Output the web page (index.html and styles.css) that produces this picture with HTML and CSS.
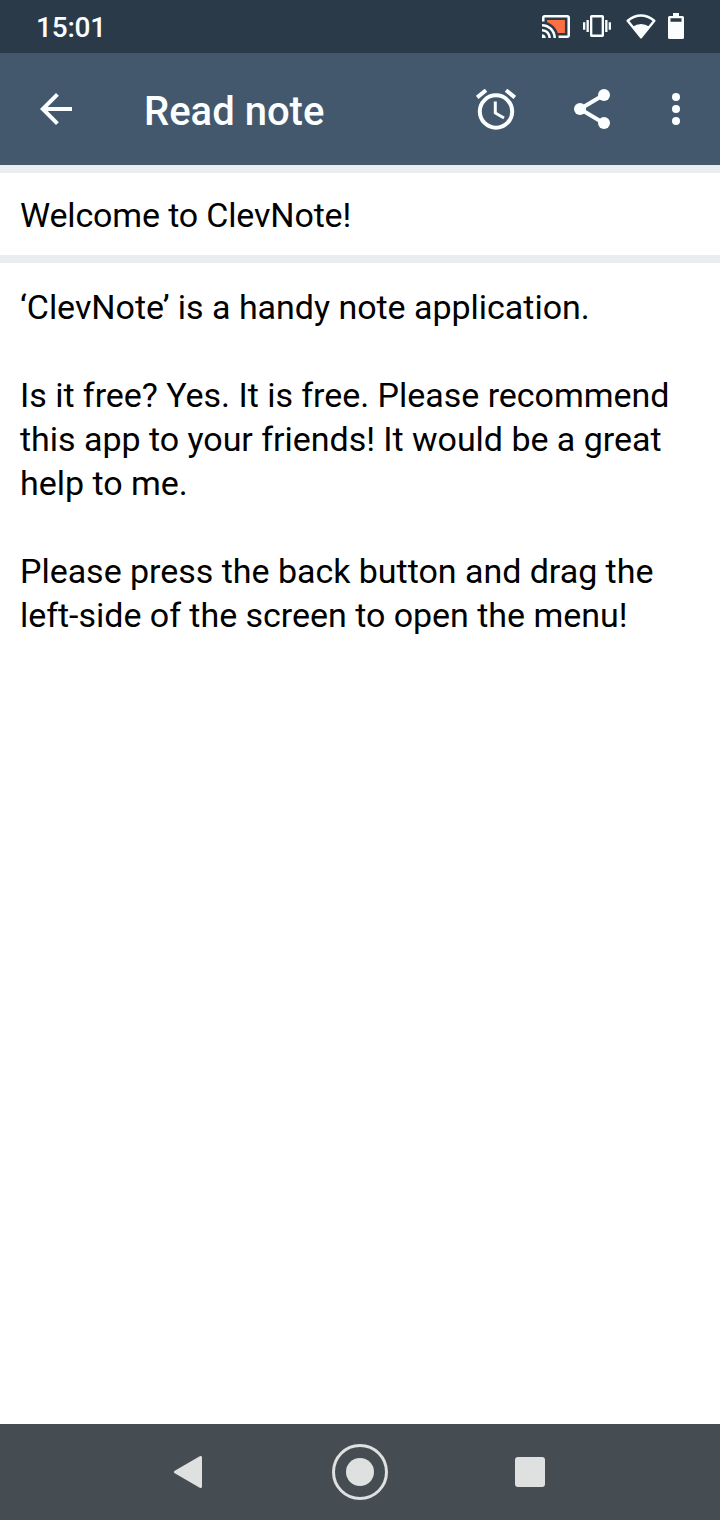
FILE: index.html
```html
<!DOCTYPE html>
<html lang="en">
<head>
<meta charset="utf-8">
<title>Read note</title>
<link rel="stylesheet" href="styles.css">
</head>
<body>
<div class="screen">
  <div class="status-bar">
    <span class="clock">15:01</span>
    <div class="status-icons">
      <svg class="cast" viewBox="1 3 22 18" preserveAspectRatio="none"><path class="accent" d="M19 7H5v1.63c3.96 1.28 7.09 4.41 8.37 8.37H19V7z"/><path d="M1 18v3h3c0-1.66-1.34-3-3-3zm0-4v2c2.76 0 5 2.24 5 5h2c0-3.87-3.13-7-7-7zM1 10v2c4.97 0 9 4.03 9 9h2c0-6.08-4.93-11-11-11zm20-7H3c-1.1 0-2 .9-2 2v3h2V5h18v14h-7v2h7c1.1 0 2-.9 2-2V5c0-1.1-.9-2-2-2z"/></svg>
      <svg class="vibrate" viewBox="0 3 24 18" preserveAspectRatio="none"><path d="M0 15h2V9H0v6zm3 2h2V7H3v10zm19-8v6h2V9h-2zm-3 8h2V7h-2v10zM16.5 3h-9C6.67 3 6 3.67 6 4.5v15c0 .83.67 1.5 1.5 1.5h9c.83 0 1.5-.67 1.5-1.5v-15c0-.83-.67-1.5-1.5-1.5zM16 19H8V5h8v14z"/></svg>
      <svg class="wifi" viewBox="0 0 30 25"><path class="outline" d="M1.700 6.700Q15-3.700 28.300 6.700L15 23.200z"/><path d="M6.500 12.800Q15 7.400 23.500 12.800L15 23.500z"/></svg>
      <svg class="battery" viewBox="0 0 16 26"><path fill-rule="evenodd" d="M5 0h6v3h3.500q1.500 0 1.500 1.500v20q0 1.500-1.500 1.500h-13q-1.500 0-1.500-1.500v-20q0-1.500 1.500-1.500H5zM2.500 5.300v3.400h11v-3.400z"/></svg>
    </div>
  </div>
  <header class="app-bar">
    <svg class="back" viewBox="4 4 16 16"><path d="M20 11H7.830l5.590-5.590L12 4l-8 8 8 8 1.410-1.410L7.830 13H20z"/></svg>
    <h1 class="heading">Read note</h1>
    <svg class="alarm" viewBox="0 0 40 41"><circle class="ring" cx="20" cy="22.500" r="16.200"/><path class="bells" d="M1.200 8.400L10 1.200M38.800 8.400L30 1.200"/><path class="hands" d="M19.300 12.500V24L28 29"/></svg>
    <svg class="share" viewBox="0 0 36 40"><path class="links" d="M30 5.800L6 20l24 14.200"/><circle cx="30" cy="6" r="6"/><circle cx="6" cy="20" r="6"/><circle cx="30" cy="34" r="6"/></svg>
    <svg class="more" viewBox="0 0 8 32"><circle cx="4" cy="4" r="4"/><circle cx="4" cy="16" r="4"/><circle cx="4" cy="28" r="4"/></svg>
  </header>
  <main class="note">
    <h2 class="note-title">Welcome to ClevNote!</h2>
    <div class="note-body">
      <p>‘ClevNote’ is a handy note application.</p>
      <p>Is it free? Yes. It is free. Please recommend<br>this app to your friends! It would be a great<br>help to me.</p>
      <p>Please press the back button and drag the<br>left-side of the screen to open the menu!</p>
    </div>
  </main>
  <nav class="nav-bar">
    <svg class="nav-back" viewBox="0 0 28 32"><path d="M1.500 16L26.500 1.500v29z"/></svg>
    <svg class="nav-home" viewBox="0 0 56 56"><circle class="home-ring" cx="28" cy="28" r="26.500"/><circle cx="28" cy="28" r="14"/></svg>
    <div class="nav-recent"></div>
  </nav>
</div>
</body>
</html>
```
FILE: styles.css
```css
* { box-sizing: border-box; margin: 0; padding: 0; }
body { background: #fff; font-family: Roboto, sans-serif; color: #000; }
svg { display: block; flex: none; fill: #fafeff; }
.screen { width: 720px; height: 1520px; display: flex; flex-direction: column; overflow: hidden; }

.status-bar { height: 53px; background: #2b3a49; display: flex; align-items: center; justify-content: space-between; padding: 0 36px 1px; }
.clock { color: #fafeff; font-size: 28px; line-height: 34px; font-weight: 500; letter-spacing: -0.2px; padding-top: 3px; }
.status-icons { display: flex; align-items: center; }
.cast { width: 28px; height: 23px; margin-right: 13px; }
.cast .accent { fill: #fe6f42; }
.vibrate { width: 28px; height: 22px; margin-right: 15px; }
.wifi { width: 30px; height: 25px; margin-right: 12px; }
.wifi .outline { fill: none; stroke: #fafeff; stroke-width: 2.4; stroke-linejoin: round; }
.battery { width: 16px; height: 26px; }

.app-bar { height: 112px; background: #43586c; display: flex; align-items: center; padding: 0 40px; }
.back { width: 32px; height: 32px; }
.heading { color: #fafeff; font-size: 40px; line-height: 48px; font-weight: 500; margin: 6px auto 0 72px; white-space: nowrap; }
.alarm { width: 40px; height: 41px; margin-right: 58px; }
.alarm path, .alarm circle { fill: none; stroke: #fafeff; }
.alarm .ring { stroke-width: 4; }
.alarm .bells { stroke-width: 4; }
.alarm .hands { stroke-width: 3; }
.share { width: 36px; height: 40px; margin-right: 62px; }
.share .links { fill: none; stroke: #fafeff; stroke-width: 4; }
.more { width: 8px; height: 32px; }

.note { flex: 1; font-size: 34px; line-height: 44px; }
.note-title { height: 98px; padding: 20px; border-top: 8px solid #ebecef; border-bottom: 8px solid #ebecef; font-size: 34px; font-weight: 400; letter-spacing: -0.16px; }
.note-body { display: flex; flex-direction: column; gap: 44px; padding: 22px 20px; white-space: nowrap; letter-spacing: -0.03px; }

.nav-bar { height: 96px; background: #454d53; display: flex; align-items: center; padding: 0 175px 0 174px; }
.nav-bar svg { fill: #dfe1e1; }
.nav-back { width: 28px; height: 32px; stroke: #dfe1e1; stroke-width: 3; stroke-linejoin: round; }
.nav-home { width: 56px; height: 56px; margin: 0 127px 0 130px; }
.nav-home .home-ring { fill: none; stroke: #dfe1e1; stroke-width: 3; }
.nav-recent { width: 30px; height: 30px; border-radius: 3px; background: #dfe1e1; }
```
